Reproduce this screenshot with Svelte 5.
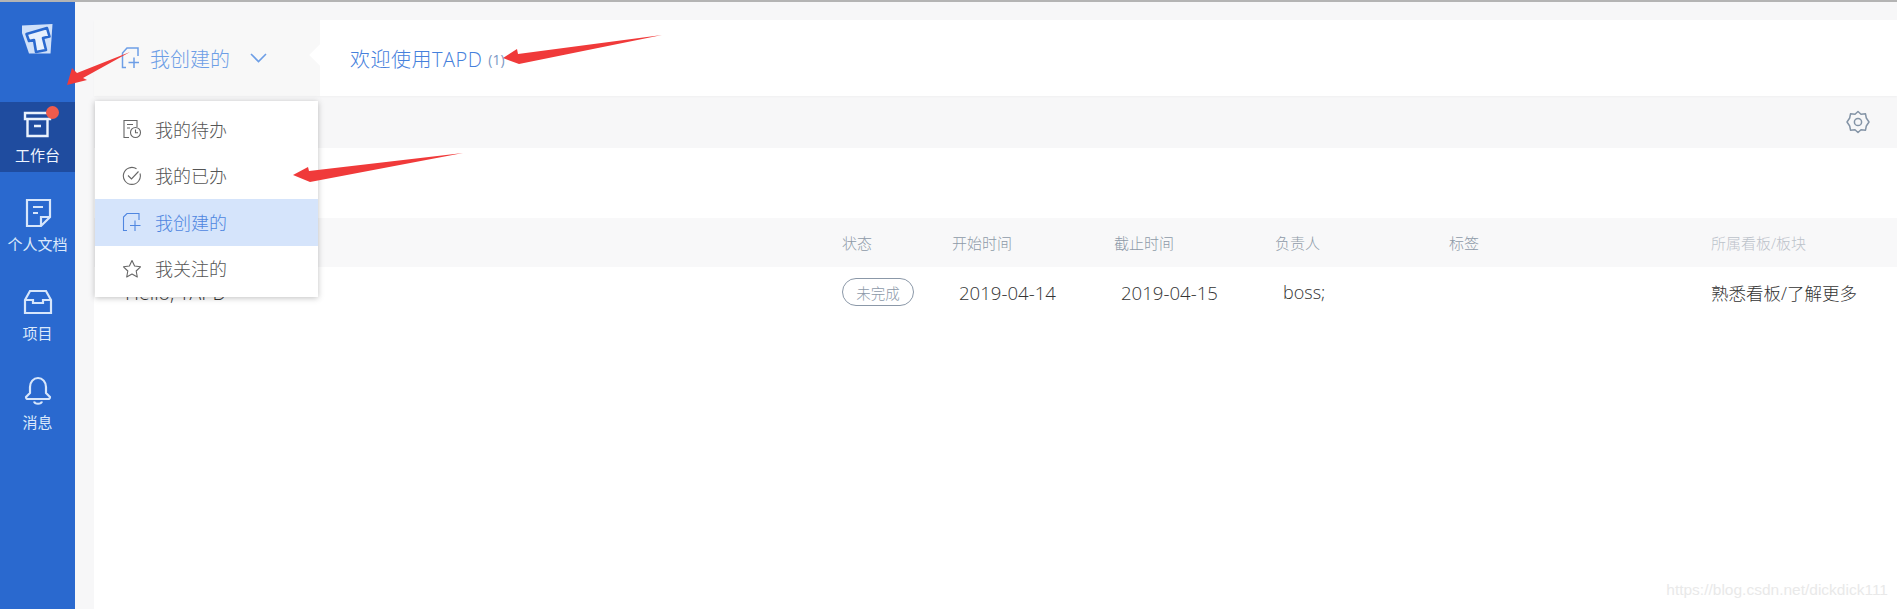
<script>
  const cols = ['状态', '开始时间', '截止时间', '负责人', '标签'];
</script>

<div class="page">
  <aside class="side">
    <div class="logo">
      <svg width="31" height="30" viewBox="0 0 31 30">
        <path d="M0 1.500 L30.500 0 L28.500 29.500 L7 29.500 L0 9 Z" fill="#cfe0f9"/>
        <path d="M4.500 10 L25 4 L27.500 12.500 L21 14 L24 26 L14 28 L12 16 L7 17 Z" fill="#e8f1fd" stroke="#2a69cf" stroke-width="2.600" stroke-linejoin="round"/>
      </svg>
    </div>
    <nav class="nav">
      <div class="item active">
        <span class="ic">
          <svg width="30" height="28" viewBox="0 0 30 28" fill="none" stroke="#eaf2fd" stroke-width="2.400">
            <path d="M2 3 H27 V9 H2 Z M4.500 9 V26 H24.500 V9 M11 16 H18"/>
          </svg>
          <i class="dot"></i>
        </span>
        <span class="lb">工作台</span>
      </div>
      <div class="item">
        <span class="ic">
          <svg width="30" height="30" viewBox="0 0 30 30" fill="none" stroke="#d7e6fb" stroke-width="2.200">
            <path d="M4 2 H27 V19 L18 28 H4 Z M27 19 H18 V28 M10 9 H20 M10 15 H15"/>
          </svg>
        </span>
        <span class="lb">个人文档</span>
      </div>
      <div class="item">
        <span class="ic">
          <svg width="30" height="28" viewBox="0 0 30 28" fill="none" stroke="#d7e6fb" stroke-width="2.200">
            <path d="M2 12 L7 3 H23 L28 12 V25 H2 Z M2 12 H10 V15 H20 V12 H28"/>
          </svg>
        </span>
        <span class="lb">项目</span>
      </div>
      <div class="item">
        <span class="ic">
          <svg width="28" height="30" viewBox="0 0 28 30" fill="none" stroke="#d7e6fb" stroke-width="2.200" stroke-linejoin="round">
            <path d="M6 17 V11 C6 6 9.500 2 14 2 C18.500 2 22 6 22 11 V17 L26 21 C26 22.500 25 23 24 23 H4 C3 23 2 22.500 2 21 Z M10 25.500 C11 28.500 17 28.500 18 25.500"/>
          </svg>
        </span>
        <span class="lb">消息</span>
      </div>
    </nav>
  </aside>

  <main class="main">
    <header class="head">
      <div class="switch">
        <svg class="plus" width="20" height="22" viewBox="0 0 20 22" fill="none" stroke="#6d9ee6" stroke-width="1.500">
          <path d="M6 20.500 H2.500 V6 L7 1 H18 V9 M8.500 15.500 H19 M14 10.500 V21"/>
        </svg>
        <span class="name">我创建的</span>
        <svg class="chev" width="17" height="10" viewBox="0 0 17 10" fill="none" stroke="#6d9ee6" stroke-width="1.600">
          <path d="M1 1 L8.500 8.500 L16 1"/>
        </svg>
      </div>
      <div class="title"><span class="welcome">欢迎使用TAPD</span><span class="count">(1)</span></div>
    </header>

    <div class="bar">
      <svg width="24" height="24" viewBox="0 0 24 24" fill="none" stroke="#8494a6" stroke-width="1.500" stroke-linejoin="round">
        <path d="M12 1.500 L15 4.200 L19.500 3.800 L20.300 8 L23 12 L20.300 16 L19.500 20.200 L15 19.800 L12 22.500 L9 19.800 L4.500 20.200 L3.700 16 L1 12 L3.700 8 L4.500 3.800 L9 4.200 Z"/>
        <circle cx="12" cy="12" r="3.600"/>
      </svg>
    </div>

    <section class="content">
      <div class="grid thead">
        <span></span>
        {#each cols as c}<span>{c}</span>{/each}
        <span class="muted">所属看板/板块</span>
      </div>
      <div class="grid row">
        <span class="hello">Hello, TAPD</span>
        <span><em class="tag">未完成</em></span>
        <span class="pad date">2019-04-14</span>
        <span class="pad date">2019-04-15</span>
        <span class="boss">boss;</span>
        <span></span>
        <span>熟悉看板/了解更多</span>
      </div>
    </section>
  </main>

  <div class="menu">
    <div class="mi">
      <svg width="20" height="20" viewBox="0 0 20 20" fill="none" stroke="#666" stroke-width="1.100">
        <path d="M7 18.500 H2 V1.500 H15 V8 M5 5.500 H11 M5 9 H8"/>
        <circle cx="13.500" cy="13.500" r="5"/>
        <path d="M13.500 10.500 V13.800 H16"/>
      </svg>
      <span>我的待办</span>
    </div>
    <div class="mi">
      <svg width="20" height="20" viewBox="0 0 20 20" fill="none" stroke="#666" stroke-width="1.100">
        <path d="M18 7.500 A8.500 8.500 0 1 1 14.500 2.800 M6 9.500 L9.500 13 L16.500 5.500"/>
      </svg>
      <span>我的已办</span>
    </div>
    <div class="mi sel">
      <svg width="20" height="20" viewBox="0 0 20 20" fill="none" stroke="#4f86e0" stroke-width="1.100">
        <path d="M5 18.500 H1.500 V5 L5 1.500 H17 V8 M8 13.500 H18.500 M13 8.500 V19"/>
      </svg>
      <span>我创建的</span>
    </div>
    <div class="mi">
      <svg width="20" height="20" viewBox="0 0 20 20" fill="none" stroke="#666" stroke-width="1.100" stroke-linejoin="round">
        <path d="M10 1.500 L12.600 7 L18.500 7.800 L14.200 12 L15.300 18 L10 15.100 L4.700 18 L5.800 12 L1.500 7.800 L7.400 7 Z"/>
      </svg>
      <span>我关注的</span>
    </div>
  </div>

  <svg class="arrows" width="1897" height="609" viewBox="0 0 1897 609">
    <path d="M130 52 L83 78 L87 80 L67 85 L72 68 L77 73 Z" fill="#f03a3a"/>
    <path d="M662 35 L519 64 L503 58 L517 49 L518 54 Z" fill="#f03a3a"/>
    <path d="M463 153 L310 182 L293 175 L308 167 L309 171 Z" fill="#f03a3a"/>
  </svg>

  <div class="mark">https://blog.csdn.net/dickdick111</div>
</div>

<style>
  :global(body) {
    margin: 0;
    background: #fff;
  }
  .page {
    position: relative;
    display: flex;
    width: 1897px;
    height: 609px;
    box-sizing: border-box;
    border-top: 2px solid #b4b4b4;
    overflow: hidden;
    font-family: "Open Sans", "Noto Sans CJK SC", sans-serif;
    color: #333;
  }
  .side {
    flex: none;
    width: 75px;
    background: #2a69cf;
    color: #dce9fb;
  }
  .logo {
    display: flex;
    justify-content: center;
    height: 100px;
    padding-top: 22px;
    box-sizing: border-box;
  }
  .nav {
    display: flex;
    flex-direction: column;
    gap: 19px;
  }
  .item {
    position: relative;
    display: flex;
    flex-direction: column;
    align-items: center;
    height: 70px;
    padding-top: 7px;
    box-sizing: border-box;
    font-size: 15px;
    line-height: 20px;
  }
  .item.active {
    background: #1f4c9f;
    color: #eef5fe;
  }
  .ic {
    position: relative;
    display: flex;
    align-items: center;
    justify-content: center;
    height: 30px;
    margin-bottom: 6px;
  }
  .dot {
    position: absolute;
    top: -3px;
    right: -6px;
    width: 13px;
    height: 13px;
    border-radius: 50%;
    background: #ef5b4c;
  }
  .main {
    flex: 1;
    min-width: 0;
    display: flex;
    flex-direction: column;
    padding: 18px 0 0 19px;
    background: #f7f7f8;
  }
  .head {
    flex: none;
    display: flex;
    height: 76px;
    background: #fff;
    box-shadow: 0 1px 2px rgba(0, 0, 0, 0.03);
  }
  .switch {
    flex: none;
    display: flex;
    align-items: center;
    width: 226px;
    padding-left: 26px;
    box-sizing: border-box;
    background: #f8f8f8;
    color: #6d9ee6;
    font-size: 20px;
  }
  .name {
    margin-left: 10px;
    font-weight: 300;
  }
  .chev {
    margin-left: 20px;
  }
  .title {
    position: relative;
    display: flex;
    align-items: center;
    padding-left: 30px;
    color: #4580dc;
  }
  .title::before {
    content: "";
    position: absolute;
    left: -7px;
    top: 26px;
    width: 18px;
    height: 18px;
    background: #fff;
    transform: rotate(45deg);
  }
  .welcome {
    font-size: 20px;
    font-weight: 300;
    letter-spacing: 0.500px;
  }
  .count {
    margin-left: 6px;
    margin-top: 2px;
    font-size: 14px;
    color: #7b98c4;
  }
  .bar {
    flex: none;
    display: flex;
    align-items: center;
    justify-content: flex-end;
    height: 52px;
    padding-right: 27px;
    box-sizing: border-box;
  }
  .content {
    flex: 1;
    padding-top: 70px;
    background: #fff;
  }
  .grid {
    display: grid;
    grid-template-columns: 748px 110px 162px 161px 174px 262px 1fr;
    align-items: center;
  }
  .grid > span:first-child {
    padding-left: 31px;
  }
  .thead {
    height: 49px;
    background: #f8f8f9;
    color: #8e9aa8;
    font-size: 15px;
    font-weight: 300;
  }
  .muted {
    color: #bcc2ca;
  }
  .row {
    height: 50px;
    font-size: 17.500px;
    font-weight: 300;
  }
  .hello {
    font-size: 19.500px;
  }
  .date {
    font-size: 18.600px;
  }
  .pad {
    padding-left: 7px;
  }
  .boss {
    padding-left: 8px;
    font-size: 18px;
  }
  .tag {
    display: inline-flex;
    align-items: center;
    justify-content: center;
    width: 70px;
    height: 26px;
    border: 1px solid #8b98a8;
    border-radius: 14px;
    color: #8b98a8;
    font-size: 14.500px;
    font-style: normal;
  }
  .menu {
    position: absolute;
    left: 95px;
    top: 99px;
    width: 223px;
    padding: 5px 0;
    background: #fff;
    box-shadow: 0 1px 6px rgba(0, 0, 0, 0.25);
    font-size: 18px;
    font-weight: 300;
    color: #555;
  }
  .mi {
    display: flex;
    align-items: center;
    gap: 13px;
    height: 46.500px;
    padding-left: 27px;
  }
  .mi span {
    margin-top: -1px;
  }
  .mi.sel {
    background: #d5e4fb;
    color: #4f86e0;
  }
  .arrows {
    position: absolute;
    left: 0;
    top: -2px;
    pointer-events: none;
  }
  .mark {
    position: absolute;
    right: 9px;
    bottom: 10px;
    font-family: "Liberation Sans", sans-serif;
    font-size: 15.500px;
    line-height: 18px;
    color: #e9e9e9;
  }
</style>
